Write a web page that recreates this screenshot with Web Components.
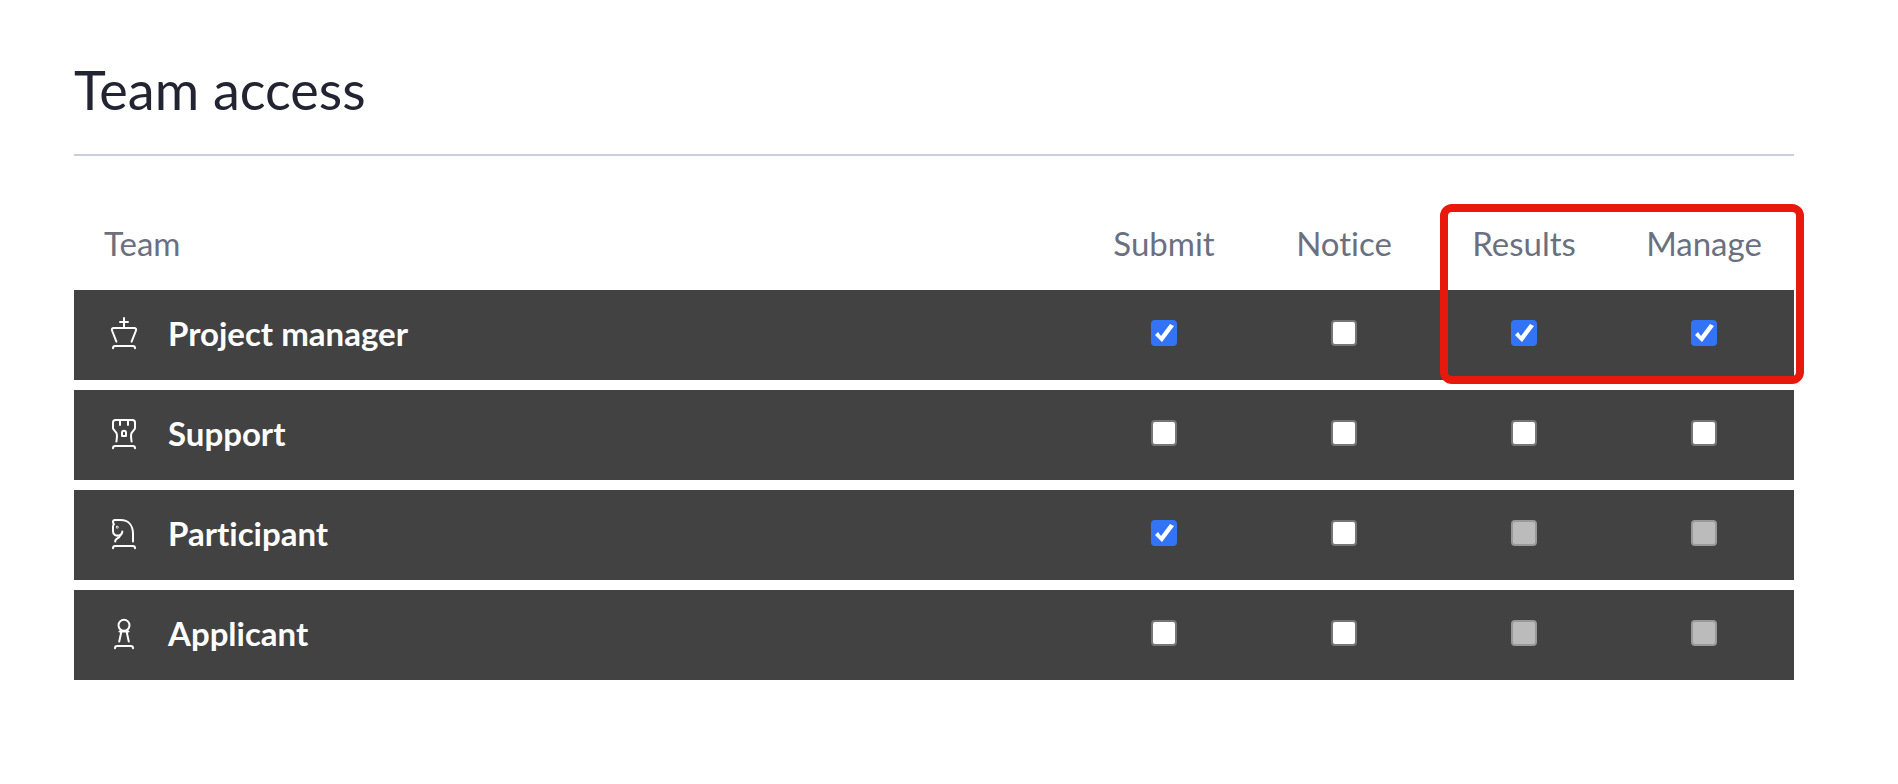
<!DOCTYPE html>
<html lang="en">
<head>
<meta charset="utf-8">
<title>Team access</title>
<style>
body {
  margin: 0;
  background: #fff;
  font-family: Lato, "Open Sans", sans-serif;
  font-variant-ligatures: none;
}
</style>
</head>
<body>

<page-section heading="Team access">
  <access-table></access-table>
</page-section>

<script>
/* PAGE SECTION: heading with a rule under it */
const sectionTemplate = document.createElement('template');
sectionTemplate.innerHTML = `
<style>
:host {
  display: block;
  padding: 58px 104px 90px 74px;
}
h1 {
  margin: 0 0 34px;
  padding-bottom: 32px;
  border-bottom: 2px solid #cacddc;
  color: #222431;
  font-size: 54px;
  line-height: 64px;
  font-weight: 400;
}
</style>
<section>
  <h1></h1>
  <slot></slot>
</section>
`;

class PageSection extends HTMLElement {
  constructor() {
    super();
    const shadowRoot = this.attachShadow({ mode: 'open' });
    shadowRoot.appendChild(sectionTemplate.content.cloneNode(true));
  }

  connectedCallback() {
    this.shadowRoot.querySelector('h1').textContent = this.getAttribute('heading');
  }
}

customElements.define('page-section', PageSection);

/* CHESS ICONS */
const chessIcons = {
  king: `
    <path d="M16 2v10M12 6h8"/>
    <path d="M8.400 25.600 4.200 15Q3 12 6 12h20q3 0 1.800 3L23.600 25.600"/>
    <path d="M5 32.200Q5 30 7.200 30h17.600q2.200 0 2.200 2.200"/>`,
  rook: `
    <path d="M8.400 25.600Q9.600 19 8.200 16.600L5.600 13.400Q5 12.600 5 12V6.500Q5 4 7.500 4h17Q27 4 27 6.500V12q0 .6-.6 1.400L23.800 16.600Q22.400 19 23.600 25.600"/>
    <path d="M12 4v5M20 4v5"/>
    <path d="M14 20v-3.200a2 2 0 0 1 4 0V20z"/>
    <path d="M5 32.200Q5 30 7.200 30h17.600q2.200 0 2.200 2.200"/>`,
  knight: `
    <path d="M25 25.600V18C25 9.500 20.500 4 12.500 4H7Q5 4 5 6q0 1.200 1 2.200Q5 9 5 10.500V15.500Q5 18 7 19q2.200 1 4.300.4Q14.300 18.500 14.300 15.500"/>
    <path d="M12.300 19.500Q11.500 21.500 9.500 22.300 7.200 23.300 7.200 25.600"/>
    <circle cx="9.200" cy="11.200" r=".4"/>
    <path d="M5 32.200Q5 30 7.200 30h17.600q2.200 0 2.200 2.200"/>`,
  pawn: `
    <circle cx="16" cy="9.300" r="5.500"/>
    <path d="M11.500 15.400h9M13.400 15.500 11.200 25.600M18.600 15.500 20.800 25.600"/>
    <path d="M7 32.200Q7 30 9.200 30h13.600q2.200 0 2.200 2.200"/>`
};

class ChessIcon extends HTMLElement {
  connectedCallback() {
    const shadowRoot = this.attachShadow({ mode: 'open' });
    shadowRoot.innerHTML = `
<style>
:host {
  display: block;
  flex: none;
}
svg {
  display: block;
  fill: none;
  stroke: currentColor;
  stroke-width: 2;
  stroke-linecap: round;
  stroke-linejoin: round;
}
</style>
<svg width="40" height="38" viewBox="-4 0 40 38" aria-hidden="true">${chessIcons[this.getAttribute('piece')]}</svg>
`;
  }
}

customElements.define('chess-icon', ChessIcon);

/* ROLE NAME: icon and label */
const roleTemplate = document.createElement('template');
roleTemplate.innerHTML = `
<style>
:host {
  display: flex;
  align-items: center;
  gap: 24px;
}
.name {
  padding-bottom: 4px;
  font-size: 33px;
  line-height: 40px;
  font-weight: 700;
}
</style>
<chess-icon></chess-icon>
<span class="name"><slot></slot></span>
`;

class TeamRole extends HTMLElement {
  connectedCallback() {
    const content = roleTemplate.content.cloneNode(true);
    content.querySelector('chess-icon').setAttribute('piece', this.getAttribute('piece'));
    this.attachShadow({ mode: 'open' }).appendChild(content);
  }
}

customElements.define('team-role', TeamRole);

/* CHECKBOX */
const checkTemplate = document.createElement('template');
checkTemplate.innerHTML = `
<style>
:host {
  display: inline-block;
  vertical-align: middle;
}
input {
  appearance: none;
  display: block;
  box-sizing: border-box;
  width: 26px;
  height: 26px;
  margin: 0;
  border: 2px solid #767676;
  border-radius: 4px;
  background: #fff;
}
input:checked {
  border: 0;
  background: #3374f6;
}
input:checked::before {
  content: "";
  display: block;
  width: 26px;
  height: 26px;
  background: #fff;
  clip-path: polygon(4px 15px, 7px 12px, 10px 16px, 19px 4px, 23px 6px, 11px 22px);
}
input:disabled {
  border-color: #999;
  background: #bbb;
}
</style>
<input type="checkbox">
`;

class AccessCheck extends HTMLElement {
  connectedCallback() {
    const content = checkTemplate.content.cloneNode(true);
    const input = content.querySelector('input');
    input.setAttribute('aria-label', this.getAttribute('label'));
    input.checked = this.hasAttribute('checked');
    input.disabled = this.hasAttribute('disabled');
    this.attachShadow({ mode: 'open' }).appendChild(content);
  }
}

customElements.define('access-check', AccessCheck);

/* TABLE */
const columns = ['Submit', 'Notice', 'Results', 'Manage'];

const team = [
  { name: 'Project manager', piece: 'king', access: ['checked', '', 'checked', 'checked'] },
  { name: 'Support', piece: 'rook', access: ['', '', '', ''] },
  { name: 'Participant', piece: 'knight', access: ['checked', '', 'disabled', 'disabled'] },
  { name: 'Applicant', piece: 'pawn', access: ['', '', 'disabled', 'disabled'] }
];

class AccessTable extends HTMLElement {
  connectedCallback() {
    const shadowRoot = this.attachShadow({ mode: 'open' });
    shadowRoot.innerHTML = `
<style>
:host {
  display: block;
  position: relative;
}
table {
  width: 100%;
  table-layout: fixed;
  border-spacing: 0 10px;
}
.access {
  width: 180px;
}
th, td {
  padding: 0;
  text-align: center;
}
thead th {
  padding: 23px 0 17px;
  color: #6b7080;
  font-size: 33px;
  line-height: 40px;
  font-weight: 400;
}
th:first-child {
  padding-left: 30px;
  text-align: left;
}
tbody tr {
  height: 90px;
  background: #424242;
  color: #fff;
}
td {
  padding-bottom: 4px;
}
/* frame over the last two columns, header and first row */
.frame {
  position: absolute;
  top: 14px;
  right: -10px;
  box-sizing: border-box;
  width: 364px;
  height: 180px;
  border: 8px solid #e8180c;
  border-radius: 12px;
  pointer-events: none;
}
</style>
<table>
  <colgroup><col>${columns.map(() => '<col class="access">').join('')}</colgroup>
  <thead>
    <tr><th scope="col">Team</th>${columns.map(c => `<th scope="col">${c}</th>`).join('')}</tr>
  </thead>
  <tbody>
    ${team.map(row => `<tr>
      <th scope="row"><team-role piece="${row.piece}">${row.name}</team-role></th>
      ${row.access.map((state, i) => `<td><access-check label="${row.name}: ${columns[i]}" ${state}></access-check></td>`).join('')}
    </tr>`).join('')}
  </tbody>
</table>
<div class="frame"></div>
`;
  }
}

customElements.define('access-table', AccessTable);
</script>
</body>
</html>
